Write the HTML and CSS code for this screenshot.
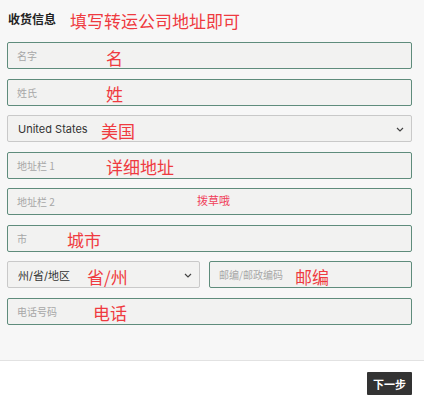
FILE: index.html
```html
<!DOCTYPE html>
<html lang="zh">
<head>
<meta charset="utf-8">
<link rel="stylesheet" href="styles.css">
</head>
<body>
<div class="page">
  <section class="form">
    <div class="head">
      <h2 class="title">收货信息</h2>
      <span class="note note-title">填写转运公司地址即可</span>
    </div>
    <div class="field"><span class="ph">名字</span><span class="note" style="left:98px">名</span></div>
    <div class="field"><span class="ph">姓氏</span><span class="note" style="left:98px">姓</span></div>
    <div class="field select"><span class="val">United States</span><span class="note" style="left:93px">美国</span><svg class="chev" viewBox="0 0 8 5"><path d="M1 1l3 3 3-3" fill="none" stroke="#444" stroke-width="1.2"/></svg></div>
    <div class="field"><span class="ph">地址栏 1</span><span class="note" style="left:98px">详细地址</span></div>
    <div class="field"><span class="ph">地址栏 2</span><span class="note small" style="left:189px">拨草哦</span></div>
    <div class="field"><span class="ph">市</span><span class="note" style="left:59px">城市</span></div>
    <div class="row">
      <div class="field select"><span class="val">州/省/地区</span><span class="note" style="left:79px">省/州</span><svg class="chev" viewBox="0 0 8 5"><path d="M1 1l3 3 3-3" fill="none" stroke="#444" stroke-width="1.2"/></svg></div>
      <div class="field"><span class="ph">邮编/邮政编码</span><span class="note" style="left:85px">邮编</span></div>
    </div>
    <div class="field"><span class="ph">电话号码</span><span class="note" style="left:85px">电话</span></div>
  </section>
  <footer class="foot">
    <button class="next">下一步</button>
  </footer>
</div>
</body>
</html>
```
FILE: styles.css
```css
* { box-sizing: border-box; }
html, body { margin: 0; padding: 0; background: #fff; }
body { font-family: "Inter", "Noto Sans CJK SC", sans-serif; }
.page { width: 424px; height: 400px; display: flex; flex-direction: column; }
.form {
  background: #f7f7f7;
  padding: 0 12px 0 7px;
  height: 361px;
  display: flex;
  flex-direction: column;
  gap: 9.5px;
  border-bottom: 1px solid #e2e2e2;
}
.head { height: 32.5px; position: relative; display: flex; align-items: flex-start; }
.title {
  margin: 11px 0 0 1px;
  font-size: 12px;
  font-weight: 700;
  color: #222;
  font-family: "Noto Sans CJK SC", sans-serif;
  line-height: 16px;
}
.note {
  position: absolute;
  top: 50%;
  transform: translateY(-42%);
  color: #ef3a40;
  font-size: 17px;
  line-height: 20px;
  font-family: "Noto Sans CJK SC", sans-serif;
  white-space: nowrap;
}
.note-title { left: 63px; top: 11px; transform: none; }
.note.small { font-size: 11px; color: #f0405a; transform: translateY(-58%); }
.field {
  position: relative;
  height: 27px;
  background: #f2f2f1;
  border: 1.5px solid #5f8c7c;
  border-radius: 2px;
  display: flex;
  align-items: center;
  padding-left: 9px;
}
.field.select { border: 1px solid #c9c9c9; padding-left: 10px; }
.ph {
  font-size: 10px;
  color: #a7a7a7;
  font-family: "Noto Sans CJK SC", sans-serif;
}
.val { font-size: 11px; color: #333; }
.chev { position: absolute; right: 7px; top: 11px; width: 8px; height: 5px; }
.row { display: flex; gap: 9px; }
.row .field:first-child { width: 193px; flex: none; }
.row .field:last-child { flex: 1; }
.foot { flex: 1; display: flex; justify-content: flex-end; align-items: flex-start; padding: 11px 12px 0 0; }
.next {
  width: 45px;
  height: 23px;
  background: #333;
  color: #fff;
  border: 0;
  border-radius: 1px;
  font-size: 11px;
  font-weight: 700;
  font-family: "Noto Sans CJK SC", sans-serif;
  padding: 0;
}
```
